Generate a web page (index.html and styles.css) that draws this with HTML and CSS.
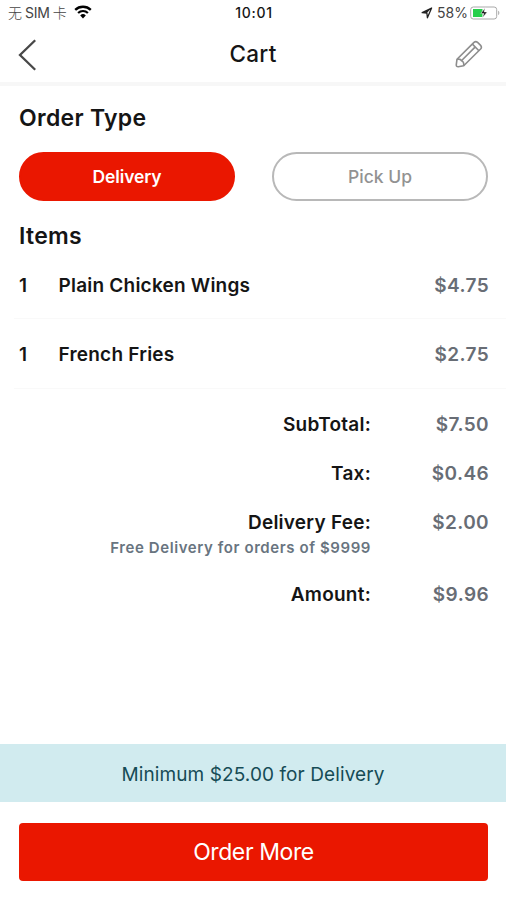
FILE: index.html
```html
<!DOCTYPE html>
<html lang="en">
<head>
<meta charset="utf-8">
<title>Cart</title>
<link rel="stylesheet" href="styles.css">
</head>
<body>
<div class="screen">
  <div class="status">
    <div class="carrier">
      <span class="sim"><span class="han">无</span><span class="latin">SIM</span><span class="han">卡</span></span>
      <svg class="wifi" width="18" height="14" viewBox="0 0 18 14">
        <path d="M1.2 4.9a11.2 11.2 0 0 1 15.6 0" fill="none" stroke="#000" stroke-width="2.3"/>
        <path d="M4.1 8a7 7 0 0 1 9.8 0" fill="none" stroke="#000" stroke-width="2.2"/>
        <path d="M9 13.4 6.2 10.4a4.1 4.1 0 0 1 5.6 0z" fill="#000"/>
      </svg>
    </div>
    <time class="clock">10:01</time>
    <div class="power">
      <svg width="12" height="12" viewBox="0 0 12 12"><path d="M10.6 1 1.2 5.7l4.7.4.5 4.7z" fill="none" stroke="#222" stroke-width="1.3" stroke-linejoin="round"/><path d="M10.6 1 1.2 5.7l4.7.4z" fill="#222"/></svg>
      <span class="percent">58%</span>
      <svg class="battery" width="30" height="14" viewBox="0 0 30 14">
        <rect x=".7" y="1" width="26" height="12" rx="2.6" fill="#fff" stroke="#a9a9a9" stroke-width="1"/>
        <path d="M3 3h9.5v8H3z" fill="#27cf4b"/>
        <path d="M28.2 4.8c1.5.5 1.5 3.7 0 4.2z" fill="#a9a9a9"/>
        <path d="m15.1 1.9-4.3 5.5h3l-1.3 4.3 4.7-5.8h-3.1z" fill="#111" stroke="#fff" stroke-width=".5"/>
      </svg>
    </div>
  </div>
  <header class="nav">
    <svg class="back" width="20" height="32" viewBox="0 0 20 32"><path d="M17.2 1.2 2 16l15.2 14.8" fill="none" stroke="#484848" stroke-width="2.3"/></svg>
    <h1>Cart</h1>
    <svg class="edit" width="28" height="28" viewBox="0 0 28 28" fill="none" stroke="#8d8d8d" stroke-width="1.6" stroke-linejoin="round">
      <path d="M2 19.2 19 2.4Q20.8.8 22.6 2.4l3 3q1.6 1.8 0 3.6L8.7 25.8l-5.5.9q-2.1 0-1.9-2.1z"/>
      <path d="m17.4 4.1 6.5 6.6M6.4 20.8 19.8 7.4M2 19.2q3.8-.5 4.4 1.6 2.8.8 2.3 5"/>
    </svg>
  </header>
  <main>
    <h2>Order Type</h2>
    <div class="types">
      <button class="type selected">Delivery</button>
      <button class="type">Pick Up</button>
    </div>
    <h2 class="items-title">Items</h2>
    <ul class="items">
      <li><span class="qty">1</span><span>Plain Chicken Wings</span><span class="price">$4.75</span></li>
      <li><span class="qty">1</span><span>French Fries</span><span class="price">$2.75</span></li>
    </ul>
    <dl class="totals">
      <div><dt>SubTotal:</dt><dd>$7.50</dd></div>
      <div><dt>Tax:</dt><dd>$0.46</dd></div>
      <div class="fee"><dt>Delivery Fee:<small>Free Delivery for orders of $9999</small></dt><dd>$2.00</dd></div>
      <div><dt>Amount:</dt><dd>$9.96</dd></div>
    </dl>
  </main>
  <footer>
    <p class="notice">Minimum $25.00 for Delivery</p>
    <button class="more">Order More</button>
  </footer>
</div>
</body>
</html>
```
FILE: styles.css
```css
* { box-sizing: border-box; }
body, h1, h2, ul, dl, dd, p { margin: 0; padding: 0; }
body { background: #fff; color: #151515; font-family: Inter, "Noto Sans CJK SC", sans-serif; }
button { font-family: inherit; padding: 0; }
svg { display: block; flex: none; }
.screen { width: 506px; height: 900px; display: flex; flex-direction: column; overflow: hidden; }
.status { height: 27px; padding: 0 6px 0 8px; display: grid; grid-template-columns: 1fr auto 1fr; align-items: center; font-size: 14px; line-height: 26px; }
.carrier, .power, .sim { display: flex; align-items: center; }
.sim { color: #444; gap: 3px; }
.han { font-family: "Noto Sans CJK SC", sans-serif; font-weight: 300; font-size: 14px; line-height: 22px; margin-top: -3px; }
.latin { font-size: 14px; letter-spacing: -.2px; margin-top: -1px; }
.wifi { margin: -3px 0 0 7px; }
.clock { font-weight: 500; font-size: 14px; letter-spacing: .7px; margin-top: -1px; }
.power { justify-content: flex-end; margin-top: -1px; }
.percent { color: #444; font-size: 14px; margin: 0 2px 0 4px; }
.nav { height: 59px; padding: 0 23px 0 18px; border-bottom: 4px solid #f7f7f7; display: grid; grid-template-columns: 1fr auto 1fr; align-items: center; }
h1 { font-size: 22.5px; line-height: 30px; font-weight: 500; letter-spacing: .3px; padding-left: 5px; margin-top: -2px; }
.edit { justify-self: end; margin-top: -1px; }
main { flex: 1; padding: 18px 18px 0 19px; }
h2 { font-size: 23px; line-height: 28px; font-weight: 600; letter-spacing: .3px; }
.types { display: flex; gap: 37px; margin-top: 20px; }
.type { flex: 1; height: 49px; border: 2px solid #b8b8b8; border-radius: 25px; background: #fff; color: #929292; font-size: 17.5px; font-weight: 500; }
.selected { background: #ea1700; border-color: #ea1700; color: #fff; font-weight: 600; letter-spacing: -.1px; }
.items-title { margin-top: 21px; }
.items { list-style: none; margin: -1px -18px 0 -5px; }
.items li { height: 70px; padding: 3px 17px 0 5px; border-bottom: 1px solid #f9f9f9; display: flex; align-items: center; font-size: 19px; font-weight: 600; letter-spacing: .22px; }
.items li:last-child { padding-top: 1px; }
.qty { width: 39.5px; }
.price, dd { margin-left: auto; color: #686d75; font-size: 19px; font-weight: 600; letter-spacing: .4px; }
.totals { margin: 24px -1px 0 0; font-size: 19px; line-height: 24px; font-weight: 600; letter-spacing: .25px; }
.totals > div { display: grid; grid-template-columns: 1fr 118px; height: 49px; text-align: right; }
.totals .fee { height: 72px; }
small { display: block; color: #687480; font-size: 15px; line-height: 26px; letter-spacing: .58px; }
.notice { height: 58px; background: #d1ebef; color: #164c56; text-align: center; font-size: 19px; line-height: 61px; letter-spacing: .1px; }
.more { display: block; width: 469px; height: 58px; margin: 21px 18px 19px 19px; border: 0; border-radius: 4px; background: #ea1700; color: #fff; font-size: 23px; letter-spacing: -.4px; }
```
